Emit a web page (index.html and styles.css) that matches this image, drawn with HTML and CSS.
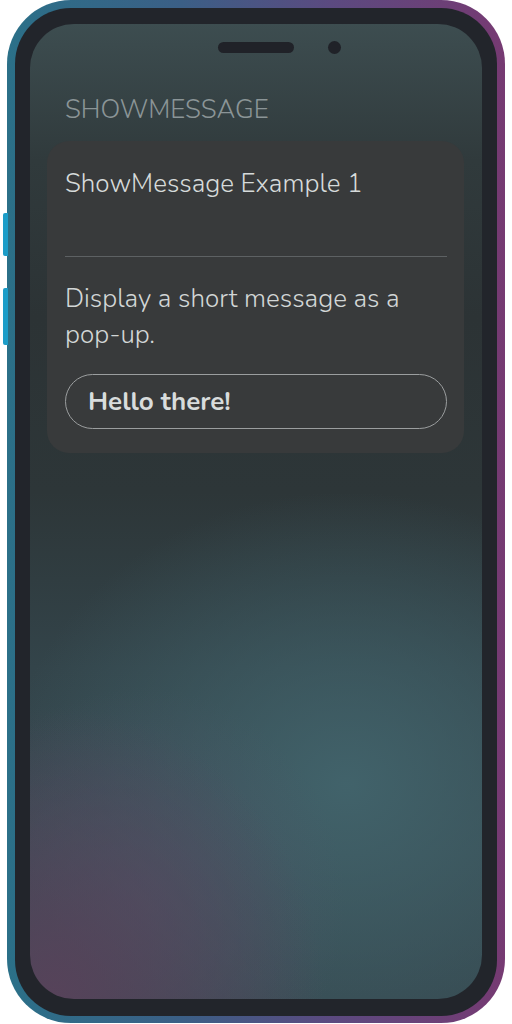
FILE: index.html
```html
<!DOCTYPE html>
<html>
<head>
<meta charset="utf-8">
<link rel="stylesheet" href="styles.css">
</head>
<body>
<div class="phone">
  <span class="side-btn side-btn-1"></span>
  <span class="side-btn side-btn-2"></span>
  <div class="bezel">
    <div class="screen">
      <div class="notch">
        <span class="speaker"></span>
        <span class="camera"></span>
      </div>
      <h1 class="page-title">SHOWMESSAGE</h1>
      <div class="card">
        <div class="card-title">ShowMessage Example 1</div>
        <hr class="divider">
        <p class="card-text">Display a short message as a pop-up.</p>
        <button class="msg-btn">Hello there!</button>
      </div>
    </div>
  </div>
</div>
</body>
</html>
```
FILE: styles.css
```css
html, body {
  margin: 0;
  padding: 0;
  background: #ffffff;
}
body {
  width: 512px;
  height: 1024px;
  font-family: "Nunito", "Lato", "Open Sans", sans-serif;
}
.phone {
  position: relative;
  margin-left: 7px;
  width: 498px;
  height: 1023px;
  box-sizing: border-box;
  padding: 8px 8px 7px 8px;
  border-radius: 64px;
  background: linear-gradient(90deg, #2b7088 0%, #3b5f86 35%, #5b4a80 65%, #763a72 100%);
}
.side-btn {
  position: absolute;
  left: -4px;
  width: 5px;
  background: #1c9dc8;
  border-radius: 2px 0 0 2px;
}
.side-btn-1 { top: 213px; height: 43px; }
.side-btn-2 { top: 288px; height: 57px; }
.bezel {
  height: 100%;
  box-sizing: border-box;
  padding: 16px 15px 17px 15px;
  border-radius: 56px;
  background: #22252b;
}
.screen {
  height: 100%;
  box-sizing: border-box;
  border-radius: 44px;
  overflow: hidden;
  padding: 17px 18px 0 17px;
  background:
    radial-gradient(ellipse 60% 30% at 5% 100%, rgba(88, 66, 90, 0.95), rgba(88, 66, 90, 0) 100%),
    radial-gradient(ellipse 45% 22% at 25% 90%, rgba(80, 84, 104, 0.6), rgba(80, 84, 104, 0) 100%),
    radial-gradient(ellipse 75% 30% at 70% 78%, rgba(66, 100, 108, 0.95), rgba(66, 100, 108, 0) 100%),
    linear-gradient(180deg, #3d4d50 0%, #303a3c 14%, #2c3335 30%, #2d3638 48%, #33444a 66%, #374b52 85%, #364950 100%);
}
.notch {
  display: flex;
  align-items: center;
  height: 13px;
  padding-left: 171px;
  gap: 34px;
}
.speaker {
  width: 76px;
  height: 11px;
  border-radius: 6px;
  background: #202228;
}
.camera {
  width: 13px;
  height: 13px;
  border-radius: 50%;
  background: #202228;
}
.page-title {
  margin: 41px 0 0 18px;
  font-size: 26px;
  line-height: 30px;
  font-weight: 300;
  color: #8b9597;
}
.card {
  margin-top: 16px;
  padding: 25px 17px 24px 18px;
  border-radius: 22px;
  background: #383a3b;
}
.card-title {
  font-size: 26px;
  line-height: 36px;
  font-weight: 300;
  color: #d6dada;
}
.divider {
  margin: 54px 0 0 0;
  border: 0;
  height: 1px;
  background: #5d6163;
}
.card-text {
  margin: 24px 0 0 0;
  font-size: 26px;
  line-height: 36px;
  font-weight: 300;
  color: #d2d6d6;
}
.msg-btn {
  display: block;
  margin-top: 21px;
  width: 100%;
  height: 55px;
  box-sizing: border-box;
  padding: 0 0 0 22px;
  text-align: left;
  border: 1px solid #9b9e9f;
  border-radius: 28px;
  background: transparent;
  font-family: inherit;
  font-size: 26px;
  font-weight: 700;
  color: #d8dcdc;
}
```
